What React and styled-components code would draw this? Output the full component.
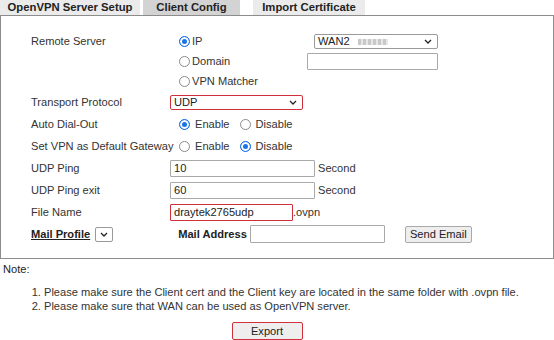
import React from "react";
import styled, { createGlobalStyle, css } from "styled-components";

const Global = createGlobalStyle`
  html, body { margin: 0; padding: 0; background: #fff; }
  body { font-family: "Liberation Sans", Arial, sans-serif; font-size: 11.1px; color: #333; }
  * { box-sizing: border-box; }
`;

const Page = styled.div`
  width: 554px;
  height: 340px;
  overflow: hidden;
`;

const Tabs = styled.div`
  display: flex;
  height: 15px;
`;

const Tab = styled.div`
  width: ${(p) => p.$w}px;
  margin-left: ${(p) => p.$ml || 0}px;
  background: ${(p) => (p.$active ? "#d3d3d3" : "#ebebeb")};
  font-weight: bold;
  font-size: 11.3px;
  color: #222;
  display: flex;
  align-items: center;
  justify-content: center;
  line-height: 15px;
  white-space: nowrap;
`;

const Panel = styled.div`
  border: 1px solid #8c8c8c;
  padding: 15px 0 13px 0;
  display: flex;
  flex-direction: column;
`;

const Row = styled.div`
  display: flex;
  align-items: center;
  height: ${(p) => p.$h || 22}px;
  white-space: nowrap;
`;

const Label = styled.div`
  width: ${(p) => (p.$auto ? "auto" : "169px")};
  padding-left: 30px;
  padding-right: ${(p) => (p.$auto ? 5 : 0)}px;
  flex: none;
  white-space: nowrap;
  ${(p) =>
    p.$bold &&
    css`
      font-weight: bold;
      text-decoration: underline;
      color: #222;
    `}
`;

const RemoteBlock = styled.div`
  display: flex;
  align-items: flex-start;
`;

const RemoteLabel = styled(Label)`
  height: 20px;
  display: flex;
  align-items: center;
`;

const RemoteOptions = styled.div`
  display: grid;
  grid-template-columns: 137px 131px;
  grid-auto-rows: 20px;
  align-items: center;
`;

const Opt = styled.label`
  display: flex;
  align-items: center;
  gap: ${(p) => p.$gap ?? 2}px;
  margin-left: ${(p) => p.$ml || 0}px;
  margin-right: ${(p) => p.$mr || 0}px;
`;

const Radio = styled.span`
  width: 11px;
  height: 11px;
  border-radius: 50%;
  border: 1px solid ${(p) => (p.$on ? "#1a73e8" : "#8a8a8a")};
  background: ${(p) => (p.$on ? "#1a73e8" : "#fff")};
  box-shadow: ${(p) => (p.$on ? "inset 0 0 0 2px #fff" : "none")};
  flex: none;
`;

const Select = styled.div`
  width: ${(p) => p.$w}px;
  height: ${(p) => p.$h || 15}px;
  margin-left: ${(p) => p.$ml || 0}px;
  border: 1px solid ${(p) => (p.$red ? "#d0303c" : "#9a9a9a")};
  border-radius: 2px;
  background: #fff;
  display: flex;
  align-items: center;
  justify-content: ${(p) => (p.$center ? "center" : "space-between")};
  padding: ${(p) => (p.$center ? "0" : "0 5px 0 3px")};
  color: #222;
`;

const Blur = styled.span`
  display: inline-block;
  width: 30px;
  height: 6px;
  margin-left: 8px;
  background: repeating-linear-gradient(90deg, #c8c8c8 0 3px, #e6e6e6 3px 5px);
  vertical-align: middle;
`;

const Input = styled.div`
  width: ${(p) => p.$w}px;
  height: ${(p) => p.$h || 17}px;
  margin-left: ${(p) => p.$ml || 0}px;
  border: 1px solid ${(p) => (p.$red ? "#d0303c" : "#a9a9a9")};
  border-radius: 1px;
  background: #fff;
  display: flex;
  align-items: center;
  padding-left: 3px;
  color: #222;
`;

const Suffix = styled.span`
  margin-left: ${(p) => p.$ml ?? 3}px;
`;

const BoldText = styled.span`
  font-weight: bold;
  color: #222;
  margin-left: ${(p) => p.$ml || 0}px;
`;

const Button = styled.div`
  width: ${(p) => p.$w}px;
  height: ${(p) => p.$h || 17}px;
  margin-left: ${(p) => p.$ml || 0}px;
  border: 1px solid ${(p) => (p.$red ? "#d0303c" : "#a9a9a9")};
  border-radius: 2px;
  background: #eeeeee;
  display: flex;
  align-items: center;
  justify-content: center;
  color: #222;
`;

const Chevron = () => (
  <svg width="8" height="5" viewBox="0 0 8 5">
    <path d="M1 1 L4 4 L7 1" fill="none" stroke="#222" strokeWidth="1.3" />
  </svg>
);

const NoteTitle = styled.div`
  margin: 4px 0 0 3px;
  color: #222;
`;

const NoteList = styled.ol`
  margin: 10px 0 0 0;
  padding-left: 44px;
  line-height: 14px;
  color: #333;
`;

const ExportWrap = styled.div`
  display: flex;
  justify-content: center;
  padding: 9px 0 0 0;
  margin-left: -20px;
`;

export default function App() {
  return (
    <Page>
      <Global />
      <Tabs>
        <Tab $w={140}>OpenVPN Server Setup</Tab>
        <Tab $w={97} $ml={3} $active>Client Config</Tab>
        <Tab $w={112} $ml={13}>Import Certificate</Tab>
      </Tabs>
      <Panel>
        <RemoteBlock>
          <RemoteLabel>Remote Server</RemoteLabel>
          <RemoteOptions>
            <Opt $ml={9}><Radio $on />IP</Opt>
            <Select $w={124} $h={15} $ml={7}>
              <span>WAN2<Blur /></span>
              <Chevron />
            </Select>
            <Opt $ml={9}><Radio />Domain</Opt>
            <Input $w={131} $h={17}></Input>
            <Opt $ml={9}><Radio />VPN Matcher</Opt>
          </RemoteOptions>
        </RemoteBlock>
        <Row>
          <Label>Transport Protocol</Label>
          <Select $w={133} $h={15} $red>
            <span>UDP</span>
            <Chevron />
          </Select>
        </Row>
        <Row>
          <Label>Auto Dial-Out</Label>
          <Opt $ml={9} $gap={5} $mr={10}><Radio $on />Enable</Opt>
          <Opt $gap={5}><Radio />Disable</Opt>
        </Row>
        <Row>
          <Label>Set VPN as Default Gateway</Label>
          <Opt $ml={9} $gap={5} $mr={10}><Radio />Enable</Opt>
          <Opt $gap={5}><Radio $on />Disable</Opt>
        </Row>
        <Row>
          <Label>UDP Ping</Label>
          <Input $w={145}>10</Input>
          <Suffix>Second</Suffix>
        </Row>
        <Row>
          <Label>UDP Ping exit</Label>
          <Input $w={145}>60</Input>
          <Suffix>Second</Suffix>
        </Row>
        <Row>
          <Label>File Name</Label>
          <Input $w={123} $red>draytek2765udp</Input>
          <Suffix $ml={0}>.ovpn</Suffix>
        </Row>
        <Row>
          <Label $bold $auto>Mail Profile</Label>
          <Select $w={18} $h={15} $center>
            <Chevron />
          </Select>
          <BoldText $ml={65}>Mail Address</BoldText>
          <Input $w={135} $h={18} $ml={3}></Input>
          <Button $w={67} $h={17} $ml={20}>Send Email</Button>
        </Row>
      </Panel>
      <NoteTitle>Note:</NoteTitle>
      <NoteList>
        <li>Please make sure the Client cert and the Client key are located in the same folder with .ovpn file.</li>
        <li>Please make sure that WAN can be used as OpenVPN server.</li>
      </NoteList>
      <ExportWrap>
        <Button $w={71} $h={18} $red>Export</Button>
      </ExportWrap>
    </Page>
  );
}
